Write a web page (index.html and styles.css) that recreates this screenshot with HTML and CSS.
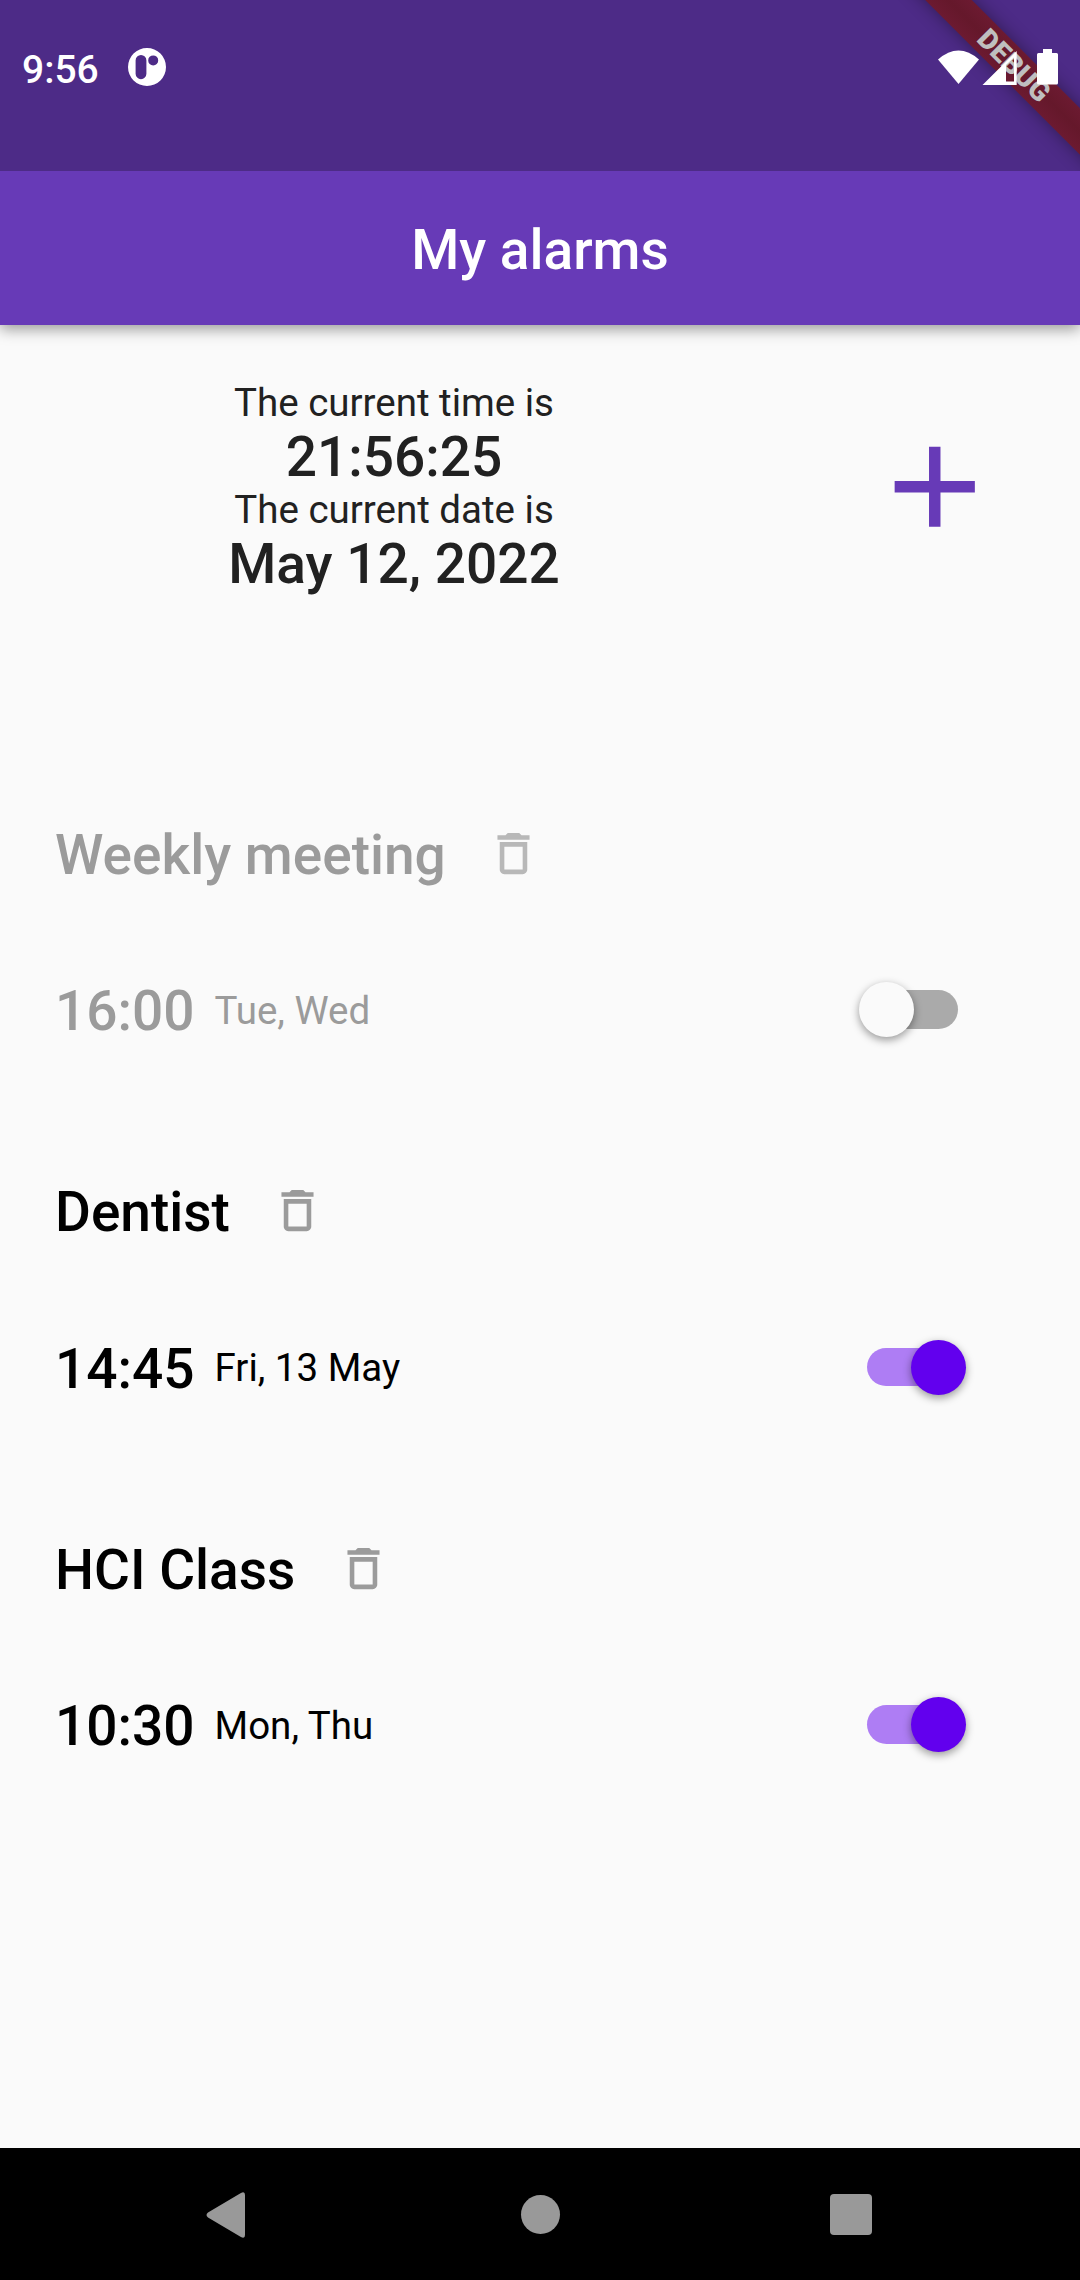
FILE: index.html
```html
<!DOCTYPE html>
<html lang="en">
<head>
<meta charset="utf-8">
<title>My alarms</title>
<link rel="stylesheet" href="styles.css">
</head>
<body>
<div class="screen">
  <div class="status-bar">
    <div class="status-left">
      <span class="clock">9:56</span>
      <svg class="notification" viewBox="0 0 38 38"><path fill="#fff" fill-rule="evenodd" d="M19 0a19 19 0 1 1 0 38a19 19 0 1 1 0-38zM13 7a5.4 5.4 0 0 0-5.4 5.4v13.4a5.4 5.4 0 0 0 10.8 0V12.400A5.400 5.400 0 0 0 13 7zM25.200 7.400a5 5 0 1 0 0 10a5 5 0 1 0 0-10z"/></svg>
    </div>
    <svg class="status-icons" viewBox="0 0 122 38"><g fill="#fff"><path d="M2 11.500Q22.500-6.500 43 11.500L22.500 36z"/><path fill-rule="evenodd" d="M46.500 37L80.700 3v34zM70 17v16.500h8V9.500z"/><path d="M107 1h9v4h4.500a1.500 1.500 0 0 1 1.500 1.500v28.500a1.500 1.500 0 0 1-1.500 1.500h-18a1.500 1.500 0 0 1-1.500-1.500V6.500a1.500 1.500 0 0 1 1.500-1.500h4.500z"/></g></svg>
    <div class="debug-corner"><div class="debug-banner">DEBUG</div></div>
  </div>
  <header class="app-bar"><h1 class="title">My alarms</h1></header>
  <main class="content">
    <section class="now">
      <div class="now-text">
        <div class="label">The current time is</div>
        <div class="value">21:56:25</div>
        <div class="label">The current date is</div>
        <div class="value">May 12, 2022</div>
      </div>
      <svg class="add" viewBox="0 0 24 24"><path fill="#673ab7" d="M19 13h-6v6h-2v-6H5v-2h6V5h2v6h6v2z"/></svg>
    </section>
    <section class="alarms">
      <article class="alarm off">
        <div class="row"><h2 class="name">Weekly meeting</h2><svg class="trash" viewBox="0 0 24 24"><path d="M6 19c0 1.100.9 2 2 2h8c1.100 0 2-.9 2-2V7H6v12zM8 9h8v10H8V9zm7.500-5l-1-1h-5l-1 1H5v2h14V4z"/></svg></div>
        <div class="row"><span class="time">16:00</span><span class="days">Tue, Wed</span><span class="switch"><span class="thumb"></span></span></div>
      </article>
      <article class="alarm">
        <div class="row"><h2 class="name">Dentist</h2><svg class="trash" viewBox="0 0 24 24"><path d="M6 19c0 1.100.9 2 2 2h8c1.100 0 2-.9 2-2V7H6v12zM8 9h8v10H8V9zm7.500-5l-1-1h-5l-1 1H5v2h14V4z"/></svg></div>
        <div class="row"><span class="time">14:45</span><span class="days">Fri, 13 May</span><span class="switch"><span class="thumb"></span></span></div>
      </article>
      <article class="alarm">
        <div class="row"><h2 class="name">HCI Class</h2><svg class="trash" viewBox="0 0 24 24"><path d="M6 19c0 1.100.9 2 2 2h8c1.100 0 2-.9 2-2V7H6v12zM8 9h8v10H8V9zm7.500-5l-1-1h-5l-1 1H5v2h14V4z"/></svg></div>
        <div class="row"><span class="time">10:30</span><span class="days">Mon, Thu</span><span class="switch"><span class="thumb"></span></span></div>
      </article>
    </section>
  </main>
  <nav class="nav-bar">
    <svg class="back" viewBox="0 0 39 46"><path fill="#999" d="M34.500 1.200Q39-1.500 39 3v40Q39 47.500 34.500 44.800L2 25.500Q-1 23 2 20.500z"/></svg>
    <span class="home"></span>
    <span class="recents"></span>
  </nav>
</div>
</body>
</html>
```
FILE: styles.css
```css
* { box-sizing: border-box; }
body { margin: 0; }
h1, h2 { margin: 0; font-size: inherit; font-weight: 500; }
.screen {
  width: 1080px;
  height: 2280px;
  display: flex;
  flex-direction: column;
  background: #fafafa;
  font-family: Roboto, sans-serif;
  overflow: hidden;
}
.status-bar {
  position: relative;
  z-index: 1;
  height: 171px;
  flex: none;
  display: flex;
  justify-content: space-between;
  align-items: flex-start;
  padding: 48px 22px 0;
  background: #4d2b87;
}
.status-left { display: flex; gap: 29px; }
.clock {
  padding-top: 1px;
  color: #fff;
  font-size: 39px;
  font-weight: 500;
  line-height: 42px;
}
.notification { width: 38px; height: 38px; }
.status-icons {
  position: relative;
  z-index: 2;
  width: 122px;
  height: 38px;
}
.debug-corner {
  position: absolute;
  top: 0;
  right: 0;
  width: 220px;
  height: 171px;
  overflow: hidden;
}
.debug-banner {
  position: absolute;
  left: -36px;
  top: 49px;
  width: 380px;
  height: 33px;
  transform: rotate(45deg);
  background: linear-gradient(#6c1a31, #65182b 50%, #6c1a31);
  box-shadow: 0 0 17px rgba(0, 0, 0, .38);
  color: #bfbfbf;
  font-size: 28px;
  font-weight: 900;
  line-height: 33px;
  text-align: center;
}
.app-bar {
  position: relative;
  height: 154px;
  flex: none;
  display: flex;
  align-items: center;
  justify-content: center;
  padding-top: 3px;
  background: #673ab7;
  box-shadow: 0 4px 14px rgba(0, 0, 0, .4);
}
.title {
  color: #fff;
  font-size: 55px;
  line-height: 64px;
}
.content { flex: 1; }
.now {
  display: flex;
  height: 462px;
  align-items: flex-start;
  padding-top: 56px;
}
.now-text {
  width: 788px;
  text-align: center;
  color: #212121;
}
.label { font-size: 38.5px; line-height: 44px; }
.value { padding-top: 2px; font-size: 55px; font-weight: 500; line-height: 61px; }
.add { width: 137.5px; height: 137.5px; margin: 37px 0 0 77.5px; }
.alarm {
  height: 357.5px;
  padding: 0 55px;
  display: flex;
  flex-direction: column;
  gap: 24.5px;
  color: #000;
}
.row { height: 132px; display: flex; align-items: center; }
.name, .time { padding-top: 3px; font-size: 55px; font-weight: 500; line-height: 64px; }
.days { margin-left: 20px; padding-top: 2px; font-size: 38.5px; line-height: 46px; }
.trash { width: 55px; height: 55px; margin-left: 40.5px; fill: #9b9b9b; }
.switch {
  display: flex;
  align-items: center;
  justify-content: flex-end;
  width: 91px;
  height: 38.5px;
  margin: 0 67.5px 0 auto;
  border-radius: 20px;
  background: #ae7df4;
}
.thumb {
  flex: none;
  width: 55px;
  height: 55px;
  margin-right: -8px;
  border-radius: 50%;
  background: #6200ee;
  box-shadow: 0 3px 8px rgba(0, 0, 0, .4);
}
.off { color: #9b9b9b; }
.off .trash { fill: #b8b8b8; }
.off .switch { justify-content: flex-start; background: #aaa; }
.off .thumb { margin: 0 0 0 -8px; background: #fafafa; }
.nav-bar {
  height: 132px;
  flex: none;
  display: grid;
  grid-template-columns: 315px 309px 1fr;
  align-items: center;
  padding: 1px 0 0 206px;
  background: #000;
}
.back { width: 39px; height: 46px; }
.home { width: 39px; height: 39px; border-radius: 50%; background: #999; }
.recents { width: 41.5px; height: 41.5px; border-radius: 4px; background: #999; }
```
